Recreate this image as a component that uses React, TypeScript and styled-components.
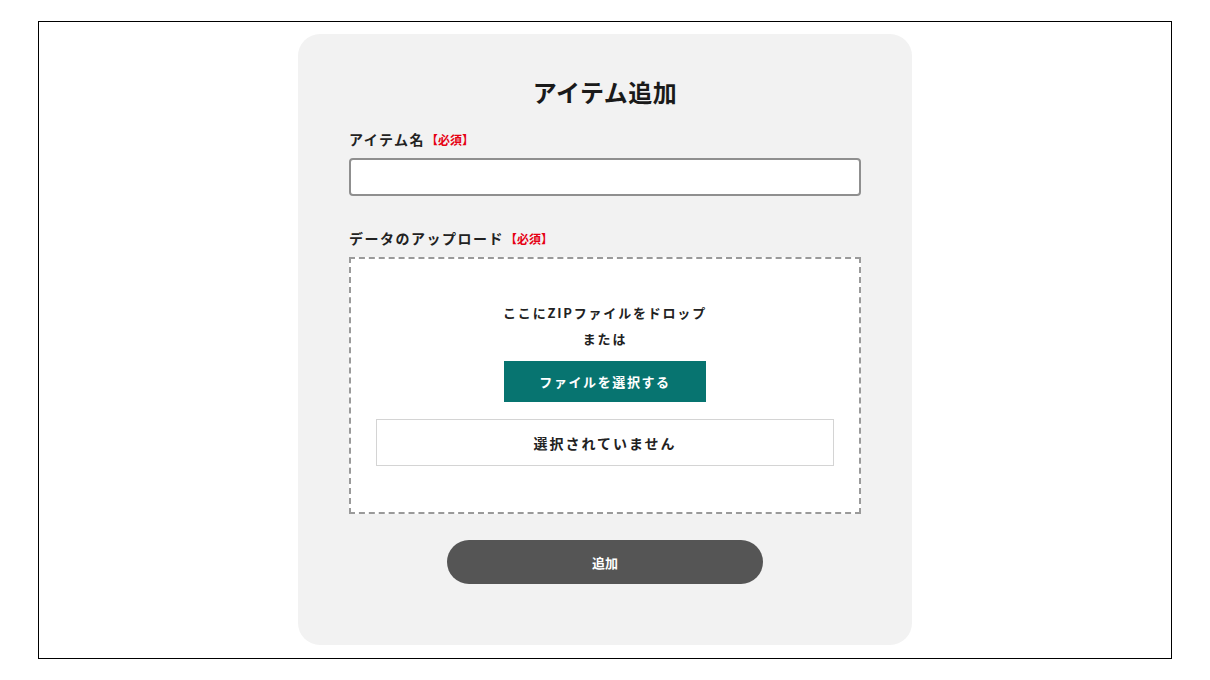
import styled, { createGlobalStyle } from 'styled-components'

const GlobalStyle = createGlobalStyle`
  html, body {
    margin: 0;
    padding: 0;
    background: #fff;
  }
  body {
    font-family: "Noto Sans CJK JP", "Noto Sans", sans-serif;
    color: #222;
  }
`

const Page = styled.div`
  padding: 21px 38px 0;
`

const Frame = styled.div`
  height: 638px;
  box-sizing: border-box;
  border: 1px solid #000;
  display: flex;
  justify-content: center;
  padding-top: 12px;
`

const Card = styled.section`
  width: 614px;
  height: 611px;
  box-sizing: border-box;
  background: #f2f2f2;
  border-radius: 22px;
  padding: 40px 51px 0;
  display: flex;
  flex-direction: column;
`

const Title = styled.h2`
  margin: 0 0 19px;
  font-size: 24px;
  line-height: 36px;
  font-weight: 700;
  text-align: center;
  letter-spacing: 0.5px;
  color: #1a1a1a;
`

const Label = styled.label<{ $gap?: number }>`
  display: flex;
  align-items: center;
  height: 20px;
  font-size: 14px;
  line-height: 20px;
  font-weight: 700;
  letter-spacing: 1.5px;
  color: #222;
  margin: ${(p) => p.$gap ?? 0}px 0 9px;
`

const Required = styled.span`
  color: #e60012;
  font-size: 12px;
  line-height: 1;
  letter-spacing: 0;
  margin-left: 1px;
  margin-top: 1px;
`

const TextInput = styled.input`
  display: block;
  width: 100%;
  height: 38px;
  box-sizing: border-box;
  border: 2px solid #8f8f8f;
  border-radius: 4px;
  background: #fff;
  padding: 0 10px;
  font: inherit;
  font-size: 14px;
`

const DropZone = styled.div`
  height: 257px;
  box-sizing: border-box;
  border: 2px dashed #9a9a9a;
  background: #fff;
  padding: 41px 25px 0;
  display: flex;
  flex-direction: column;
  align-items: center;
`

const DropText = styled.p`
  margin: 0;
  font-size: 13px;
  line-height: 26px;
  font-weight: 700;
  letter-spacing: 1.8px;
  color: #222;
`

const SelectButton = styled.button`
  margin-top: 9px;
  width: 202px;
  height: 41px;
  border: none;
  background: #077470;
  color: #fff;
  font-family: inherit;
  font-size: 13px;
  font-weight: 700;
  letter-spacing: 1.6px;
  cursor: pointer;
`

const FileName = styled.div`
  margin-top: 17px;
  align-self: stretch;
  height: 47px;
  box-sizing: border-box;
  border: 1px solid #d4d4d4;
  display: flex;
  align-items: center;
  justify-content: center;
  font-size: 14px;
  font-weight: 700;
  letter-spacing: 2px;
  color: #222;
`

const SubmitButton = styled.button`
  align-self: center;
  margin-top: 26px;
  width: 316px;
  height: 44px;
  border: none;
  border-radius: 22px;
  background: #555;
  color: #fff;
  font-family: inherit;
  font-size: 13px;
  font-weight: 700;
  cursor: pointer;
`

export default function App() {
  return (
    <Page>
      <GlobalStyle />
      <Frame>
        <Card>
          <Title>アイテム追加</Title>
          <Label>
            アイテム名<Required>【必須】</Required>
          </Label>
          <TextInput type="text" />
          <Label $gap={32}>
            データのアップロード<Required>【必須】</Required>
          </Label>
          <DropZone>
            <DropText>ここにZIPファイルをドロップ</DropText>
            <DropText>または</DropText>
            <SelectButton type="button">ファイルを選択する</SelectButton>
            <FileName>選択されていません</FileName>
          </DropZone>
          <SubmitButton type="button">追加</SubmitButton>
        </Card>
      </Frame>
    </Page>
  )
}
